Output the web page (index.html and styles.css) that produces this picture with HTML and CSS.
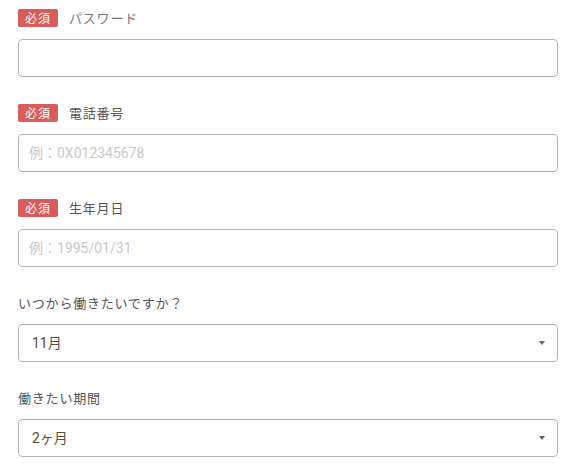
FILE: index.html
```html
<!DOCTYPE html>
<html>
<head>
  <link rel="stylesheet" href="styles.css">
</head>
<body>
  <form class="form">
    <div class="field">
      <div class="field-label"><span class="badge">必須</span><span class="label-text light">パスワード</span></div>
      <input class="text-input" type="password">
    </div>
    <div class="field">
      <div class="field-label"><span class="badge">必須</span><span class="label-text">電話番号</span></div>
      <input class="text-input" type="text" placeholder="例：0X012345678">
    </div>
    <div class="field">
      <div class="field-label"><span class="badge">必須</span><span class="label-text">生年月日</span></div>
      <input class="text-input" type="text" placeholder="例：1995/01/31">
    </div>
    <div class="field">
      <div class="field-label"><span class="label-text">いつから働きたいですか？</span></div>
      <div class="select-wrap">
        <select class="select">
          <option>11月</option>
        </select>
      </div>
    </div>
    <div class="field">
      <div class="field-label"><span class="label-text">働きたい期間</span></div>
      <div class="select-wrap">
        <select class="select">
          <option>2ヶ月</option>
        </select>
      </div>
    </div>
  </form>
</body>
</html>
```

FILE: styles.css
```css
body {
  margin: 0;
  background-color: #fff;
  color: #555;
  font-family: "Noto Sans CJK JP", "Noto Sans", sans-serif;
}
.form {
  padding: 9px 18px 0;
  display: flex;
  flex-direction: column;
  gap: 27px;
}
.field {
  display: flex;
  flex-direction: column;
  gap: 12px;
}
.field-label {
  display: flex;
  align-items: center;
  height: 18px;
  gap: 11px;
}
.badge {
  display: inline-block;
  width: 40px;
  height: 18px;
  line-height: 18px;
  text-align: center;
  background-color: #d95c5c; /* red "required" tag */
  color: #fff;
  font-size: 12px;
  border-radius: 2px;
  letter-spacing: 1px;
}
.label-text {
  font-size: 13px;
  letter-spacing: 0.8px;
  color: #555;
  line-height: 18px;
}
.label-text.light {
  color: #777;
}
.text-input, .select {
  box-sizing: border-box;
  width: 100%;
  height: 38px;
  padding: 0 10px;
  border: 1px solid #b4b4b4; /* grey border */
  border-radius: 4px;
  background-color: #fff;
  font-family: Roboto, "Noto Sans CJK JP", sans-serif;
  font-size: 14px;
  color: #444;
  outline: none;
}
.text-input::placeholder {
  color: #c8c8c8;
}
.select-wrap {
  position: relative;
}
.select {
  appearance: none;
  -webkit-appearance: none;
  padding-left: 13px;
  color: #5a4a3a;
}
.select-wrap::after {
  content: "";
  position: absolute;
  right: 13px;
  top: 17px;
  border-left: 3.5px solid transparent;
  border-right: 3.5px solid transparent;
  border-top: 4px solid #666;
  pointer-events: none;
}
```
